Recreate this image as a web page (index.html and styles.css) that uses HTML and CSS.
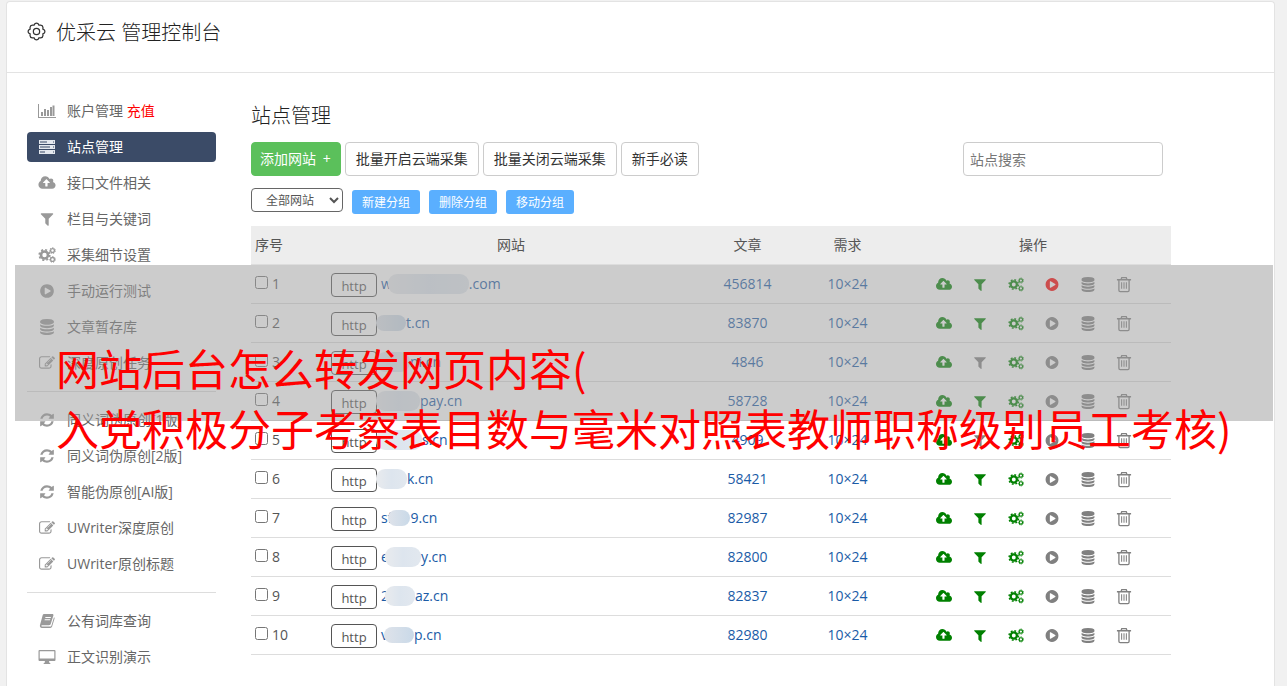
FILE: index.html
```html
<!DOCTYPE html>
<html lang="zh-CN">
<head>
<meta charset="utf-8">
<title>优采云 管理控制台</title>
<link rel="stylesheet" href="styles.css">
</head>
<body>
<svg class="sprite" aria-hidden="true">
  <symbol id="cloud" viewBox="-64 0 1920 1792"><path fill-rule="evenodd" d="M1216 864q0-14-9-23l-352-352q-9-9-23-9t-23 9l-351 351q-10 12-10 24 0 14 9 23t23 9h224v352q0 13 9.500 22.500t22.500 9.500h192q13 0 22.500-9.500t9.500-22.500v-352h224q13 0 22.500-9.500t9.500-22.500zm640 288q0 159-112.500 271.500t-271.500 112.500h-1088q-185 0-316.500-131.500t-131.500-316.500q0-130 70-240t188-165q-2-30-2-43 0-212 150-362t362-150q156 0 285.500 87t188.500 231q71-62 166-62 106 0 181 75t75 181q0 76-41 138 130 31 213.500 135.500t83.500 238.500z"/></symbol>
  <symbol id="filter" viewBox="0 0 1792 1792"><path d="M1595 295q17 41-14 70l-493 493v742q0 42-39 59-13 5-25 5-27 0-45-19l-256-256q-19-19-19-45v-486l-493-493q-31-29-14-70 17-39 59-39h1280q42 0 59 39z"/></symbol>
  <symbol id="play" viewBox="0 0 1792 1792"><path fill-rule="evenodd" d="M896 128q209 0 385.500 103t279.500 279.500 103 385.500-103 385.500-279.500 279.500-385.500 103-385.500-103-279.500-279.500-103-385.500 103-385.500 279.500-279.500 385.500-103zm384 823q32-18 32-55t-32-55l-544-320q-31-19-64-1-32 19-32 56v640q0 37 32 56 16 8 32 8 17 0 32-9z"/></symbol>
  <symbol id="db" viewBox="0 0 1792 1792"><path d="M896 768q237 0 443-43t325-127v170q0 69-103 128t-280 93.500-385 34.500-385-34.500-280-93.500-103-128v-170q119 84 325 127t443 43zm0 768q237 0 443-43t325-127v170q0 69-103 128t-280 93.500-385 34.500-385-34.500-280-93.500-103-128v-170q119 84 325 127t443 43zm0-384q237 0 443-43t325-127v170q0 69-103 128t-280 93.500-385 34.500-385-34.500-280-93.500-103-128v-170q119 84 325 127t443 43zm0-1152q208 0 385 34.500t280 93.500 103 128v128q0 69-103 128t-280 93.500-385 34.500-385-34.500-280-93.500-103-128v-128q0-69 103-128t280-93.500 385-34.500z"/></symbol>
  <symbol id="refresh" viewBox="0 0 1792 1792"><path d="M1639 1056q0 5-1 7-64 268-268 434.500t-478 166.500q-146 0-282.500-55t-243.500-157l-129 129q-19 19-45 19t-45-19-19-45v-448q0-26 19-45t45-19h448q26 0 45 19t19 45-19 45l-137 137q71 66 161 102t187 36q134 0 250-65t186-179q11-17 53-117 8-23 30-23h192q13 0 22.500 9.500t9.500 22.500zm25-800v448q0 26-19 45t-45 19h-448q-26 0-45-19t-19-45 19-45l138-138q-148-137-349-137-134 0-250 65t-186 179q-11 17-53 117-8 23-30 23h-199q-13 0-22.500-9.500t-9.500-22.500v-7q65-268 270-434.500t480-166.500q146 0 284 55.500t245 156.500l130-129q19-19 45-19t45 19 19 45z"/></symbol>
  <symbol id="edit" viewBox="0 0 1792 1792"><path fill-rule="evenodd" d="M888 1184l116-116-152-152-116 116v56h96v96h56zm440-720q-16-16-33 1l-350 350q-17 17-1 33t33-1l350-350q17-17 1-33zm80 594v190q0 119-84.500 203.500t-203.500 84.500h-832q-119 0-203.500-84.500t-84.500-203.500v-832q0-119 84.500-203.500t203.500-84.500h832q63 0 117 25 15 7 18 23 3 17-9 29l-49 49q-14 14-32 8-23-6-45-6h-832q-66 0-113 47t-47 113v832q0 66 47 113t113 47h832q66 0 113-47t47-113v-126q0-13 9-22l64-64q15-15 35-7t20 29zm-96-738l288 288-672 672h-288v-288zm444 132l-92 92-288-288 92-92q28-28 68-28t68 28l152 152q28 28 28 68t-28 68z"/></symbol>
  <symbol id="chart" viewBox="0 0 18 16"><path d="M0 1h1v13h17v1H0zM3 9h2v4H3zM6 6h2v7H6zM9 7h2v6H9zM12 4h2v9h-2zM14.500 2.500h2V13h-2z"/></symbol>
  <symbol id="server" viewBox="0 0 18 16"><path fill-rule="evenodd" d="M1 1h16v4H1zM1 6h16v4H1zM1 11h16v4H1zM2 2.600v.8h7v-.8zM2 7.600v.8h10v-.8zM2 12.600v.8h5v-.8zM15 2.500v1h1v-1zM15 7.500v1h1v-1zM15 12.500v1h1v-1z"/></symbol>
  <symbol id="cogs" viewBox="0 0 18 16"><g fill="none" stroke="currentColor"><circle cx="6.500" cy="8" r="3.500" stroke-width="2.600"/><circle cx="6.500" cy="8" r="5.300" stroke-width="1.600" stroke-dasharray="2.080 2.083"/><circle cx="14.500" cy="3.600" r="1.900" stroke-width="1.300"/><circle cx="14.500" cy="3.600" r="2.900" stroke-width="1" stroke-dasharray="1.300 1.300"/><circle cx="14.500" cy="12.400" r="1.900" stroke-width="1.300"/><circle cx="14.500" cy="12.400" r="2.900" stroke-width="1" stroke-dasharray="1.300 1.300"/></g></symbol>
  <symbol id="book" viewBox="0 0 16 16"><path fill-rule="evenodd" d="M5.200 1h8c1 0 1.500.6 1.200 1.500L11.700 11c-.3.800-.8 1.200-1.700 1.200H2.700c-.6.600-.1 1.400.7 1.400h8c.4 0 .7-.2.900-.7l2.700-8.600c.6.300.7.800.5 1.500l-2.400 7.700c-.3.900-1 1.400-1.800 1.400H3C1.300 14.900.5 13.500 1 12L3.600 2.500C3.900 1.500 4.300 1 5.200 1zM6.500 4l-.3 1h5.500l.3-1zM5.800 6.300l-.3 1H11l.3-1z"/></symbol>
  <symbol id="desktop" viewBox="0 0 18 16"><path fill-rule="evenodd" d="M1.500 1h15q1 0 1 1v9q0 1-1 1H11l.5 2h.8v1H5.700v-1h.8l.5-2H1.500q-1 0-1-1V2q0-1 1-1zM1.700 2.200v7.300h14.600V2.200z"/></symbol>
  <symbol id="trash" viewBox="0 0 16 18"><g fill="none" stroke="currentColor" stroke-width="1.400"><path d="M.5 4h15M2.600 4v11.200q0 1.300 1.300 1.300h8.200q1.300 0 1.300-1.300V4M4.800 4l.8-2.200h4.800l.8 2.200"/><path stroke-width="1.100" d="M5.500 6.500v7M8 6.500v7M10.500 6.500v7"/></g></symbol>
  <symbol id="gear" viewBox="0 0 20 20"><g fill="none" stroke="currentColor" stroke-width="1.300"><circle cx="10" cy="10" r="3.300"/><path d="M8.300 1.800Q10 .6 11.700 1.800L12.500 3.300 14.300 3.200Q16.600 3.400 16.800 5.700L16.700 7.500 18.200 8.300Q19.400 10 18.200 11.700L16.700 12.500 16.800 14.300Q16.600 16.600 14.300 16.800L12.500 16.700 11.700 18.200Q10 19.400 8.300 18.200L7.500 16.700 5.700 16.800Q3.400 16.600 3.200 14.300L3.300 12.500 1.800 11.700Q.6 10 1.800 8.300L3.300 7.500 3.200 5.700Q3.400 3.400 5.700 3.200L7.500 3.300Z"/></g></symbol>
</svg>

<div class="panel">
  <header class="top">
    <svg class="gear"><use href="#gear"/></svg>
    <h1>优采云 管理控制台</h1>
  </header>
  <div class="body">
    <nav class="side">
      <a href="#"><svg><use href="#chart"/></svg><span>账户管理 <b>充值</b></span></a>
      <a href="#" class="active"><svg><use href="#server"/></svg><span>站点管理</span></a>
      <a href="#"><svg><use href="#cloud"/></svg><span>接口文件相关</span></a>
      <a href="#"><svg><use href="#filter"/></svg><span>栏目与关键词</span></a>
      <a href="#"><svg><use href="#cogs"/></svg><span>采集细节设置</span></a>
      <a href="#"><svg><use href="#play"/></svg><span>手动运行测试</span></a>
      <a href="#"><svg><use href="#db"/></svg><span>文章暂存库</span></a>
      <a href="#"><svg><use href="#edit"/></svg><span>深度原创任务</span></a>
      <hr>
      <a href="#"><svg><use href="#refresh"/></svg><span>同义词伪原创[1版]</span></a>
      <a href="#"><svg><use href="#refresh"/></svg><span>同义词伪原创[2版]</span></a>
      <a href="#"><svg><use href="#refresh"/></svg><span>智能伪原创[AI版]</span></a>
      <a href="#"><svg><use href="#edit"/></svg><span>UWriter深度原创</span></a>
      <a href="#"><svg><use href="#edit"/></svg><span>UWriter原创标题</span></a>
      <hr>
      <a href="#"><svg><use href="#book"/></svg><span>公有词库查询</span></a>
      <a href="#"><svg><use href="#desktop"/></svg><span>正文识别演示</span></a>
    </nav>
    <main>
      <h2>站点管理</h2>
      <div class="bar">
        <button class="btn add">添加网站 <span>+</span></button>
        <button class="btn">批量开启云端采集</button>
        <button class="btn">批量关闭云端采集</button>
        <button class="btn">新手必读</button>
        <input class="search" type="text" placeholder="站点搜索" aria-label="站点搜索">
      </div>
      <div class="groups">
        <select aria-label="分组"><option>全部网站</option></select>
        <button>新建分组</button>
        <button>删除分组</button>
        <button>移动分组</button>
      </div>
      <table>
        <colgroup><col class="c-no"><col class="c-site"><col class="c-art"><col class="c-need"><col></colgroup>
        <thead><tr><th class="left">序号</th><th>网站</th><th>文章</th><th>需求</th><th>操作</th></tr></thead>
        <tbody>
          <tr><td><label><input type="checkbox">1</label></td><td><div class="site"><button>http</button><a href="#">w<i class="over" style="width:81px"></i>.com</a></div></td><td><a href="#">456814</a></td><td><a href="#">10×24</a></td><td><div class="ops"><svg class="on"><use href="#cloud"/></svg><svg class="on"><use href="#filter"/></svg><svg class="on"><use href="#cogs"/></svg><svg class="run"><use href="#play"/></svg><svg><use href="#db"/></svg><svg class="bin"><use href="#trash"/></svg></div></td></tr>
          <tr><td><label><input type="checkbox">2</label></td><td><div class="site"><button>http</button><a href="#"><i class="wide blue" style="width:30px"></i>t.cn</a></div></td><td><a href="#">83870</a></td><td><a href="#">10×24</a></td><td><div class="ops"><svg class="on"><use href="#cloud"/></svg><svg class="on"><use href="#filter"/></svg><svg class="on"><use href="#cogs"/></svg><svg><use href="#play"/></svg><svg><use href="#db"/></svg><svg class="bin"><use href="#trash"/></svg></div></td></tr>
          <tr><td><label><input type="checkbox">3</label></td><td><div class="site"><button>http</button><a href="#"><i class="wide" style="width:34px"></i>ni.cn</a></div></td><td><a href="#">4846</a></td><td><a href="#">10×24</a></td><td><div class="ops"><svg class="on"><use href="#cloud"/></svg><svg><use href="#filter"/></svg><svg class="on"><use href="#cogs"/></svg><svg><use href="#play"/></svg><svg><use href="#db"/></svg><svg class="bin"><use href="#trash"/></svg></div></td></tr>
          <tr><td><label><input type="checkbox">4</label></td><td><div class="site"><button>http</button><a href="#"><i class="wide" style="width:44px"></i>pay.cn</a></div></td><td><a href="#">58728</a></td><td><a href="#">10×24</a></td><td><div class="ops"><svg class="on"><use href="#cloud"/></svg><svg class="on"><use href="#filter"/></svg><svg class="on"><use href="#cogs"/></svg><svg><use href="#play"/></svg><svg><use href="#db"/></svg><svg class="bin"><use href="#trash"/></svg></div></td></tr>
          <tr><td><label><input type="checkbox">5</label></td><td><div class="site"><button>http</button><a href="#"><i class="wide" style="width:46px"></i>s.cn</a></div></td><td><a href="#">4909</a></td><td><a href="#">10×24</a></td><td><div class="ops"><svg class="on"><use href="#cloud"/></svg><svg><use href="#filter"/></svg><svg class="on"><use href="#cogs"/></svg><svg><use href="#play"/></svg><svg><use href="#db"/></svg><svg class="bin"><use href="#trash"/></svg></div></td></tr>
          <tr><td><label><input type="checkbox">6</label></td><td><div class="site"><button>http</button><a href="#"><i class="wide" style="width:31px"></i>k.cn</a></div></td><td><a href="#">58421</a></td><td><a href="#">10×24</a></td><td><div class="ops"><svg class="on"><use href="#cloud"/></svg><svg class="on"><use href="#filter"/></svg><svg class="on"><use href="#cogs"/></svg><svg><use href="#play"/></svg><svg><use href="#db"/></svg><svg class="bin"><use href="#trash"/></svg></div></td></tr>
          <tr><td><label><input type="checkbox">7</label></td><td><div class="site"><button>http</button><a href="#">sf<i class="over blue" style="width:22px"></i>9.cn</a></div></td><td><a href="#">82987</a></td><td><a href="#">10×24</a></td><td><div class="ops"><svg class="on"><use href="#cloud"/></svg><svg class="on"><use href="#filter"/></svg><svg class="on"><use href="#cogs"/></svg><svg><use href="#play"/></svg><svg><use href="#db"/></svg><svg class="bin"><use href="#trash"/></svg></div></td></tr>
          <tr><td><label><input type="checkbox">8</label></td><td><div class="site"><button>http</button><a href="#">e<i class="over" style="width:36px"></i>y.cn</a></div></td><td><a href="#">82800</a></td><td><a href="#">10×24</a></td><td><div class="ops"><svg class="on"><use href="#cloud"/></svg><svg class="on"><use href="#filter"/></svg><svg class="on"><use href="#cogs"/></svg><svg><use href="#play"/></svg><svg><use href="#db"/></svg><svg class="bin"><use href="#trash"/></svg></div></td></tr>
          <tr><td><label><input type="checkbox">9</label></td><td><div class="site"><button>http</button><a href="#">2<i class="over" style="width:30px"></i>az.cn</a></div></td><td><a href="#">82837</a></td><td><a href="#">10×24</a></td><td><div class="ops"><svg class="on"><use href="#cloud"/></svg><svg class="on"><use href="#filter"/></svg><svg class="on"><use href="#cogs"/></svg><svg><use href="#play"/></svg><svg><use href="#db"/></svg><svg class="bin"><use href="#trash"/></svg></div></td></tr>
          <tr><td><label><input type="checkbox">10</label></td><td><div class="site"><button>http</button><a href="#">v<i class="over blue" style="width:30px"></i>p.cn</a></div></td><td><a href="#">82980</a></td><td><a href="#">10×24</a></td><td><div class="ops"><svg class="on"><use href="#cloud"/></svg><svg class="on"><use href="#filter"/></svg><svg class="on"><use href="#cogs"/></svg><svg><use href="#play"/></svg><svg><use href="#db"/></svg><svg class="bin"><use href="#trash"/></svg></div></td></tr>
        </tbody>
      </table>
    </main>
  </div>
</div>
<div class="banner">网站后台怎么转发网页内容(<br>入党积极分子考察表目数与毫米对照表教师职称级别员工考核)</div>
</body>
</html>
```
FILE: styles.css
```css
* { box-sizing: border-box; }
body {
  margin: 0;
  padding: 1px 12px 0 6px;
  position: relative;
  overflow-x: hidden;
  background: #f1f1f1;
  color: #555;
  font: 14px/20px "Open Sans", "Noto Sans CJK SC", sans-serif;
}
button, input, select { font: inherit; color: inherit; margin: 0; }
button { cursor: pointer; }
a { color: #1a5ba6; text-decoration: none; }
svg { fill: currentColor; }
.sprite { display: none; }
.panel {
  min-height: calc(100vh - 1px);
  background: #fff;
  border: 1px solid #e3e3e3;
  border-bottom: 0;
  border-radius: 4px 4px 0 0;
}
.top {
  display: flex;
  align-items: flex-start;
  gap: 10px;
  padding: 20px 20px 28px;
  border-bottom: 1px solid #e3e3e3;
  color: #333;
}
.gear { width: 19px; height: 19px; }
h1, h2 { margin: 0; font-size: 20px; font-weight: 300; line-height: 22px; color: #222; }
.body { display: flex; gap: 35px; padding: 23px 20px 14px; }
.side { flex: none; width: 189px; display: flex; flex-direction: column; gap: 6px; }
.side a {
  display: flex;
  align-items: center;
  gap: 11px;
  height: 30px;
  padding-left: 11px;
  border-radius: 4px;
  color: #666;
}
.side svg { width: 18px; height: 16px; color: #999; }
.side b { color: #f00; font-weight: 400; }
.side .active { background: #3b4b67; color: #fff; }
.side .active svg { color: #e4e8ee; }
.side hr { width: 100%; height: 1px; margin: 7px 0; border: 0; background: #ddd; }
main { width: 920px; padding-top: 9px; }
.bar { display: flex; gap: 4px; margin-top: 15px; }
.btn {
  height: 34px;
  padding: 0 10px;
  border: 1px solid #ccc;
  border-radius: 4px;
  background: #fff;
  color: #333;
}
.add { border-color: #5bc05b; background: #5bc05b; color: #fff; }
.add.btn { padding: 0 9px 0 8px; }
.add span { margin-left: 3px; }
.search {
  width: 200px;
  height: 34px;
  margin: 0 8px 0 auto;
  padding: 0 6px;
  border: 1px solid #ccc;
  border-radius: 4px;
}
.search::placeholder { color: #777; }
.groups { display: flex; gap: 9px; margin: 12px 0; font-size: 12px; line-height: 20px; }
.groups select {
  width: 92px;
  height: 24px;
  padding-left: 10px;
  border: 1px solid #666;
  border-radius: 4px;
  background: #fff;
}
.groups button {
  height: 24px;
  margin-top: 2px;
  padding: 2px 10px 0;
  border: 0;
  border-radius: 3px;
  background: #5aafff;
  color: #fff;
}
table { width: 100%; table-layout: fixed; border-collapse: separate; border-spacing: 0; }
.c-no { width: 76px; }
.c-site { width: 368px; }
.c-art { width: 105px; }
.c-need { width: 95px; }
th, td { height: 39px; padding: 0 4px; border-bottom: 1px solid #ddd; text-align: center; }
th { background: #ededed; font-weight: 400; }
th.left, td:first-child { text-align: left; }
label { display: flex; align-items: center; gap: 4px; }
label input { width: 13px; height: 13px; margin-bottom: 3px; }
.site { display: flex; align-items: center; gap: 4px; }
.site button {
  width: 46px;
  height: 24px;
  margin-top: 2px;
  padding: 2px 0 0;
  border: 1px solid #555;
  border-radius: 4px;
  background: #fff;
  font-size: 13px;
  line-height: 20px;
}
.site a { display: flex; align-items: center; }
.site i {
  height: 20px;
  border-radius: 9px;
  background: linear-gradient(90deg, #e9ebee, #dde5ee 50%, #e2e8ef);
}
.site .wide { margin-left: -5px; }
.site .over { margin-left: -4px; }
.site .blue { background: linear-gradient(90deg, #dfe3ea, #c9d9e8); height: 16px; }
.ops { display: flex; justify-content: center; gap: 20px; padding: 1px 0 0 2px; color: #808080; }
.ops svg { width: 16px; height: 15px; }
.ops .on { color: #008000; }
.ops .run { color: #f00; }
.ops .bin { height: 17px; margin-top: -1px; }
.banner {
  position: absolute;
  top: 265px;
  left: 15px;
  right: 14px;
  height: 156px;
  padding: 72px 0 0 41px;
  background: rgba(153, 153, 153, 0.5);
  color: #f00;
  font: 43px/60px "Noto Sans CJK SC", sans-serif;
  white-space: nowrap;
}
```
